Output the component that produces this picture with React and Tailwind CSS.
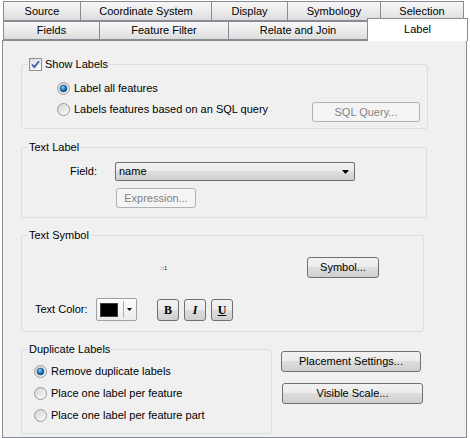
const btn =
  'flex items-center justify-center rounded-[3px] border border-[#707070] bg-[linear-gradient(#f2f2f2_0%,#ebebeb_50%,#dddddd_50%,#cfcfcf_100%)] text-[11px] text-black';
const btnOff =
  'flex items-center justify-center rounded-[3px] border border-[#adb2b5] bg-[#f4f4f4] text-[11px] text-[#838383]';
const tab =
  'flex items-center justify-center h-full border border-[#898c95] -ml-px first:ml-0 bg-[linear-gradient(#f7f7f7_0%,#ececec_50%,#dcdcdc_100%)] text-[11px] text-black';

function Radio({ checked }) {
  return (
    <svg width="13" height="13" viewBox="0 0 13 13" className="shrink-0">
      <defs>
        <linearGradient id="rg" x1="0" y1="0" x2="1" y2="1">
          <stop offset="0" stopColor="#d0d0d0" />
          <stop offset="1" stopColor="#ffffff" />
        </linearGradient>
        <radialGradient id="rd" cx="0.4" cy="0.35" r="0.7">
          <stop offset="0" stopColor="#8fd0f5" />
          <stop offset="0.5" stopColor="#1f7fc4" />
          <stop offset="1" stopColor="#0b3f78" />
        </radialGradient>
      </defs>
      <circle cx="6.5" cy="6.5" r="6" fill="url(#rg)" stroke="#9a9a9a" />
      {checked && <circle cx="6.5" cy="6.5" r="3.5" fill="url(#rd)" stroke="#1b4f82" strokeWidth="0.6" />}
    </svg>
  );
}

function Check() {
  return (
    <svg width="13" height="13" viewBox="0 0 13 13" className="shrink-0">
      <defs>
        <linearGradient id="cg" x1="0" y1="0" x2="1" y2="1">
          <stop offset="0" stopColor="#dcdcdc" />
          <stop offset="1" stopColor="#ffffff" />
        </linearGradient>
      </defs>
      <rect x="0.5" y="0.5" width="12" height="12" fill="url(#cg)" stroke="#8e8f8f" />
      <path d="M3 6.5 L5.3 9 L10 3.2" fill="none" stroke="#4157a8" strokeWidth="1.8" />
    </svg>
  );
}

function RadioRow({ checked, children, className = '' }) {
  return (
    <div className={`flex h-[16px] items-center gap-[4px] text-[11px] ${className}`}>
      <Radio checked={checked} />
      <span>{children}</span>
    </div>
  );
}

function Group({ title, className = '', children }) {
  return (
    <div className={`relative rounded-[3px] border border-[#d5dfe5] ${className}`}>
      <div className="absolute -top-[8px] left-[6px] flex items-center bg-[#f0f0f0] px-[1px] text-[11px] leading-[14px]">
        {title}
      </div>
      {children}
    </div>
  );
}

export default function App() {
  return (
    <div className="h-[438px] w-[470px] overflow-hidden bg-white font-['Liberation_Sans',Arial,sans-serif] text-black">
      <div className="flex h-[21px] pl-[3px] pt-[1px]">
        <div className={`${tab} w-[78px]`}>Source</div>
        <div className={`${tab} w-[132px]`}>Coordinate System</div>
        <div className={`${tab} w-[77px]`}>Display</div>
        <div className={`${tab} w-[94px]`}>Symbology</div>
        <div className={`${tab} w-[84px]`}>Selection</div>
      </div>
      <div className="flex h-[19px] items-start pl-[3px]">
        <div className={`${tab} w-[97px]`}>Fields</div>
        <div className={`${tab} w-[130px]`}>Feature Filter</div>
        <div className={`${tab} w-[140px]`}>Relate and Join</div>
        <div className="relative z-10 -ml-px -mt-[3px] flex h-[23px] w-[101px] items-start justify-center border border-b-0 border-[#898c95] bg-white pt-[2px] text-[11px]">
          Label
        </div>
      </div>

      <div className="ml-[2px] h-[398px] w-[465px] border border-[#898c95] bg-[#f0f0f0] pl-[18px]">
        <Group
          className="mt-[23px] h-[65px] w-[407px]"
          title={
            <>
              <Check />
              <span className="ml-[3px]">Show Labels</span>
            </>
          }
        >
          <div className="pl-[35px] pt-[15px]">
            <RadioRow checked>Label all features</RadioRow>
            <div className="mt-[5px] flex items-start justify-between pr-[7px]">
              <RadioRow>Labels features based on an SQL query</RadioRow>
              <div className={`${btnOff} mt-[1px] h-[20px] w-[108px]`}>SQL Query...</div>
            </div>
          </div>
        </Group>

        <Group className="mt-[18px] h-[71px] w-[406px]" title="Text Label">
          <div className="pt-[14px]">
            <div className="flex items-center">
              <div className="w-[75px] text-right text-[11px]">Field:</div>
              <div className="ml-[18px] flex h-[19px] w-[240px] items-center justify-between rounded-[2px] border border-[#707070] bg-[linear-gradient(#f2f2f2_0%,#ebebeb_50%,#dddddd_50%,#cfcfcf_100%)] pl-[3px] pr-[5px] text-[11px]">
                <span>name</span>
                <svg width="7" height="4" viewBox="0 0 7 4">
                  <path d="M0 0 H7 L3.5 4 Z" fill="#000" />
                </svg>
              </div>
            </div>
            <div className={`${btnOff} ml-[94px] mt-[7px] h-[20px] w-[80px]`}>Expression...</div>
          </div>
        </Group>

        <Group className="mt-[17px] h-[97px] w-[403px]" title="Text Symbol">
          <div className="flex pt-[21px]">
            <div className="w-[285px] pl-[138px] pt-[8px] text-[5px] leading-[6px]">:::1</div>
            <div className={`${btn} h-[21px] w-[72px]`}>Symbol...</div>
          </div>
          <div className="mt-[20px] flex items-center pl-[13px]">
            <div className="w-[61px] text-[11px]">Text Color:</div>
            <div className="flex h-[23px] w-[41px] items-center rounded-[2px] border border-[#a0a0a0] bg-[linear-gradient(#fdfdfd,#ececec)] pl-[3px]">
              <div className="h-[14px] w-[18px] border border-[#404040] bg-black" />
              <div className="ml-[5px] h-[17px] w-px bg-[#b0b0b0]" />
              <svg width="5" height="3" viewBox="0 0 5 3" className="ml-[3px]">
                <path d="M0 0 H5 L2.5 3 Z" fill="#000" />
              </svg>
            </div>
            <div className="ml-[20px] flex gap-[5px] font-['Liberation_Serif',serif] text-[12px] font-bold">
              <div className={`${btn} h-[22px] w-[22px] text-[12px]`}>B</div>
              <div className={`${btn} h-[22px] w-[22px] text-[12px] italic`}>I</div>
              <div className={`${btn} h-[22px] w-[22px] text-[12px] underline`}>U</div>
            </div>
          </div>
        </Group>

        <div className="mt-[17px] flex items-start">
          <Group className="h-[85px] w-[251px]" title="Duplicate Labels">
            <div className="flex flex-col gap-[6px] pl-[12px] pt-[13px]">
              <RadioRow checked>Remove duplicate labels</RadioRow>
              <RadioRow>Place one label per feature</RadioRow>
              <RadioRow>Place one label per feature part</RadioRow>
            </div>
          </Group>
          <div className="ml-[9px] flex flex-col">
            <div className={`${btn} mt-[2px] h-[21px] w-[140px]`}>Placement Settings...</div>
            <div className={`${btn} ml-[1px] mt-[11px] h-[21px] w-[141px]`}>Visible Scale...</div>
          </div>
        </div>
      </div>
    </div>
  );
}
